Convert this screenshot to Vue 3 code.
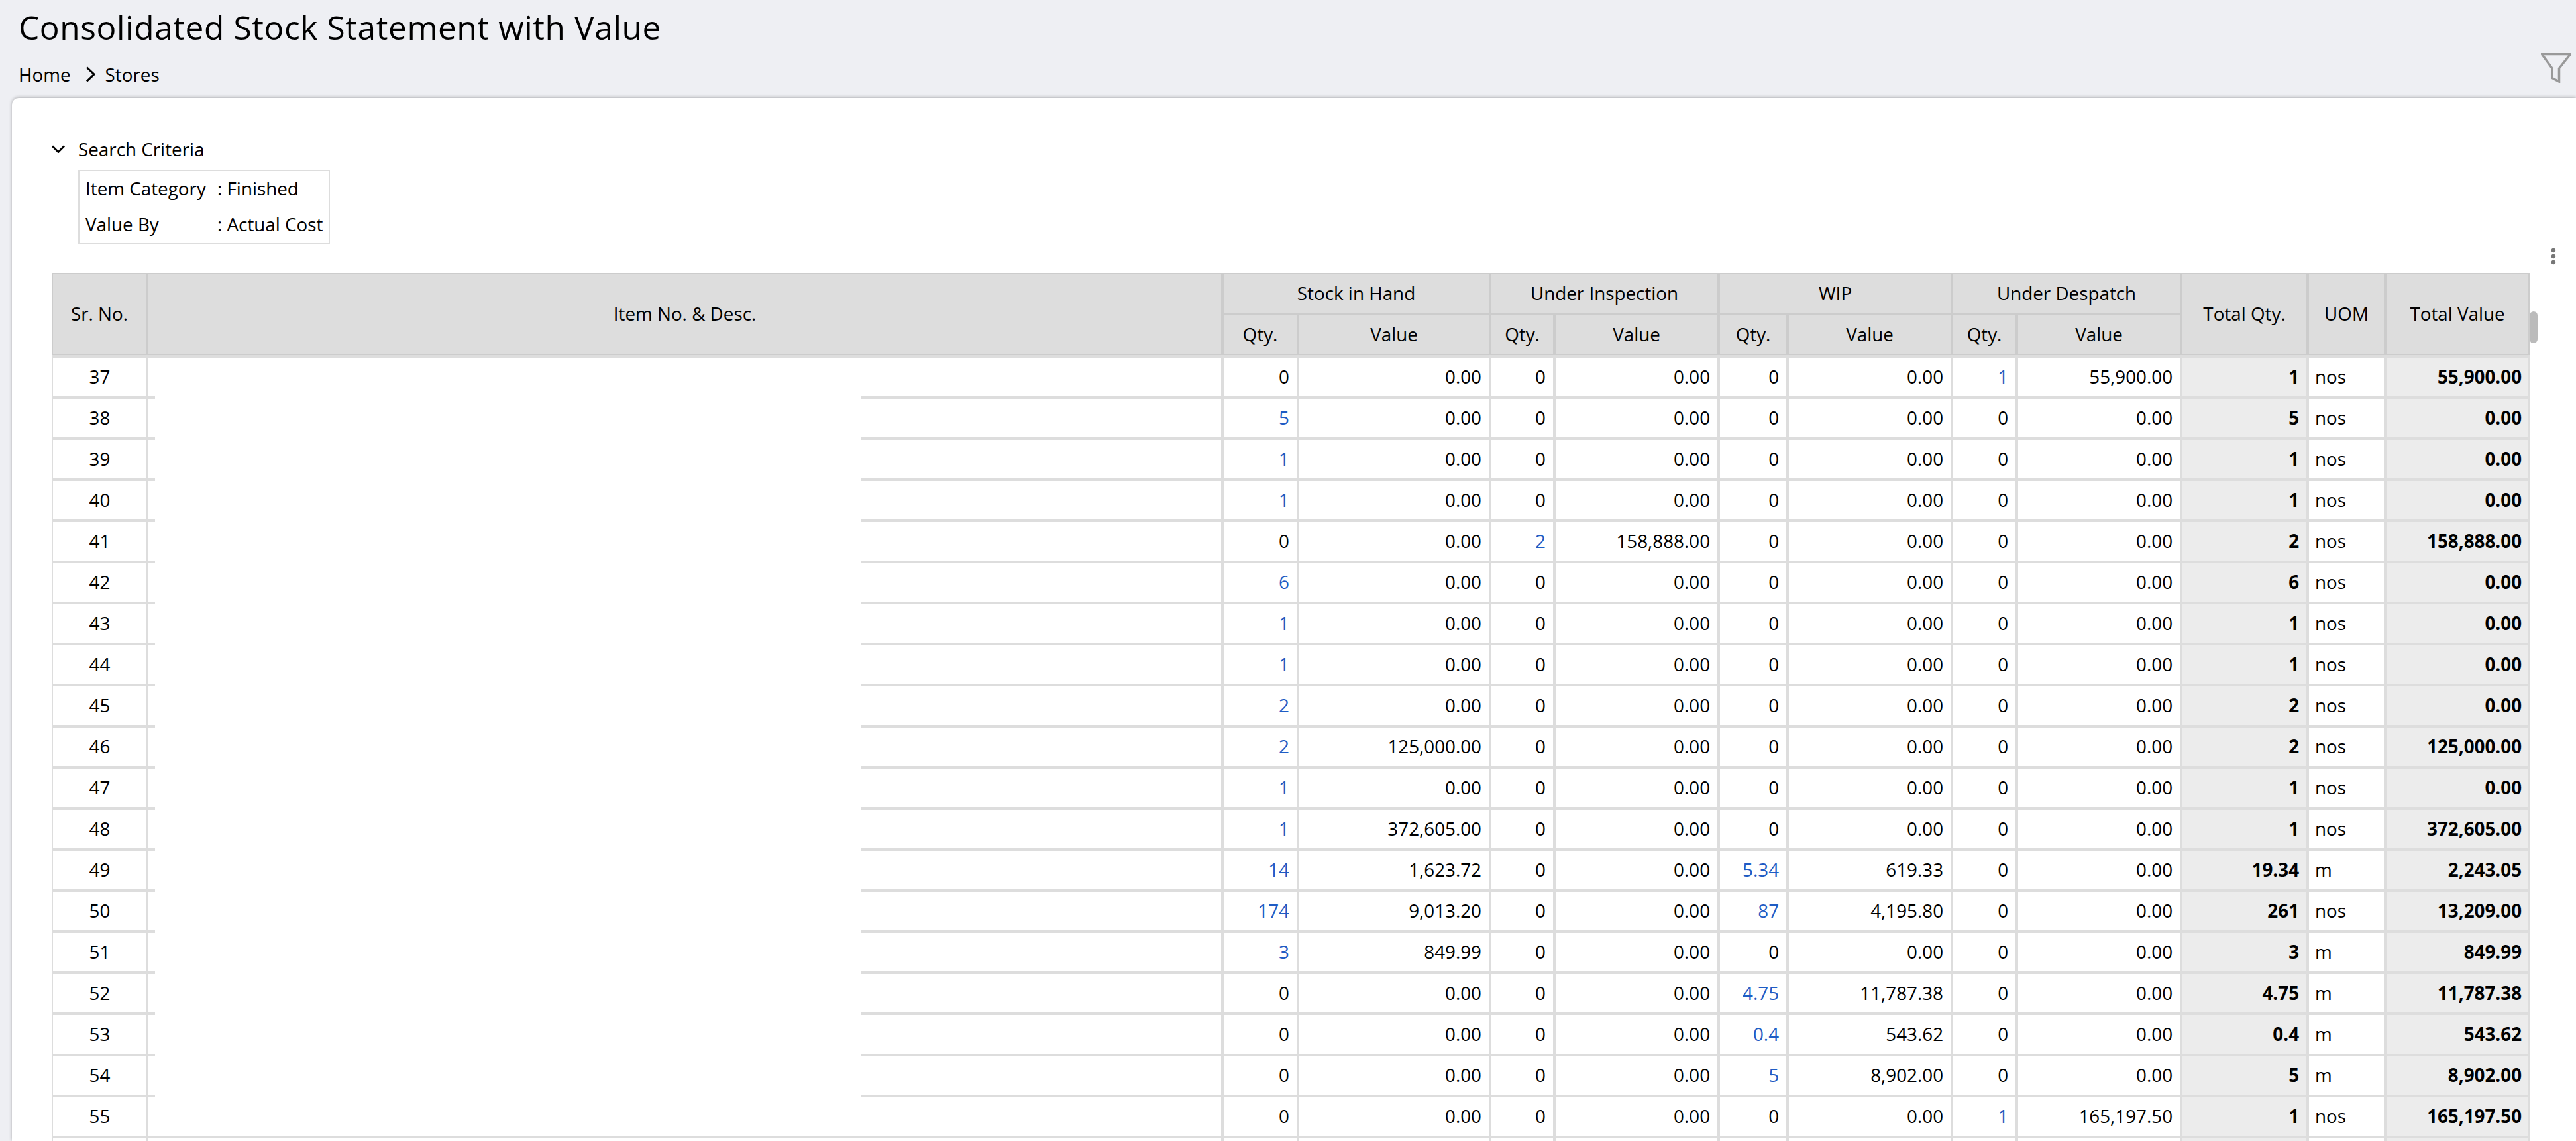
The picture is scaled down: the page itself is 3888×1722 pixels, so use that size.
<script setup>
const base = { s: ['0', '0.00'], i: ['0', '0.00'], w: ['0', '0.00'], d: ['0', '0.00'] }
const mk = (no, over, tq, uom, tv) => ({ no, ...base, ...over, tq, uom, tv })
const rows = [
  mk(37, { d: ['1', '55,900.00'] }, '1', 'nos', '55,900.00'),
  mk(38, { s: ['5', '0.00'] }, '5', 'nos', '0.00'),
  mk(39, { s: ['1', '0.00'] }, '1', 'nos', '0.00'),
  mk(40, { s: ['1', '0.00'] }, '1', 'nos', '0.00'),
  mk(41, { i: ['2', '158,888.00'] }, '2', 'nos', '158,888.00'),
  mk(42, { s: ['6', '0.00'] }, '6', 'nos', '0.00'),
  mk(43, { s: ['1', '0.00'] }, '1', 'nos', '0.00'),
  mk(44, { s: ['1', '0.00'] }, '1', 'nos', '0.00'),
  mk(45, { s: ['2', '0.00'] }, '2', 'nos', '0.00'),
  mk(46, { s: ['2', '125,000.00'] }, '2', 'nos', '125,000.00'),
  mk(47, { s: ['1', '0.00'] }, '1', 'nos', '0.00'),
  mk(48, { s: ['1', '372,605.00'] }, '1', 'nos', '372,605.00'),
  mk(49, { s: ['14', '1,623.72'], w: ['5.34', '619.33'] }, '19.34', 'm', '2,243.05'),
  mk(50, { s: ['174', '9,013.20'], w: ['87', '4,195.80'] }, '261', 'nos', '13,209.00'),
  mk(51, { s: ['3', '849.99'] }, '3', 'm', '849.99'),
  mk(52, { w: ['4.75', '11,787.38'] }, '4.75', 'm', '11,787.38'),
  mk(53, { w: ['0.4', '543.62'] }, '0.4', 'm', '543.62'),
  mk(54, { w: ['5', '8,902.00'] }, '5', 'm', '8,902.00'),
  mk(55, { d: ['1', '165,197.50'] }, '1', 'nos', '165,197.50'),
]
const groups = ['Stock in Hand', 'Under Inspection', 'WIP', 'Under Despatch']
const widths = [146, 1623, 114, 290, 97, 248, 104, 248, 98, 248, 191, 117, 216]
const keys = ['s', 'i', 'w', 'd']
</script>

<template>
  <div class="page">
    <header class="head">
      <h1 class="title">Consolidated Stock Statement with Value</h1>
      <div class="crumbs">
        <span>Home</span>
        <svg class="crumb-sep" viewBox="0 0 15 24" fill="none" stroke="#000" stroke-width="3"><path d="M2 1.5 13 12 2 22.5" /></svg>
        <span>Stores</span>
      </div>
      <svg class="filter" viewBox="0 0 46 46" fill="none" stroke="#999" stroke-width="3.5"><path d="M1.5 1.5H44.5L27.5 23V43L17 37.5V23Z" /></svg>
    </header>
    <main class="card">
      <div class="criteria">
        <div class="crit-title">
          <svg class="crit-chev" viewBox="0 0 20 12" fill="none" stroke="#000" stroke-width="3"><path d="M1 1.5 10 10.5 19 1.5" /></svg>
          <span>Search Criteria</span>
        </div>
        <div class="crit-box">
          <div class="crit-row"><span class="crit-key">Item Category</span><span>: Finished</span></div>
          <div class="crit-row"><span class="crit-key">Value By</span><span>: Actual Cost</span></div>
        </div>
      </div>
      <div class="tools">
        <svg class="dots" viewBox="0 0 8 26" fill="#777"><circle cx="4" cy="4" r="3.2" /><circle cx="4" cy="13" r="3.2" /><circle cx="4" cy="22" r="3.2" /></svg>
      </div>
      <div class="table-wrap">
        <table class="grid">
          <colgroup><col v-for="(w, i) in widths" :key="i" :style="{ width: w + 'px' }"></colgroup>
          <thead>
            <tr class="r1">
              <th rowspan="2" class="first">Sr. No.</th>
              <th rowspan="2">Item No. &amp; Desc.</th>
              <th v-for="g in groups" :key="g" colspan="2" class="grp">{{ g }}</th>
              <th rowspan="2">Total Qty.</th>
              <th rowspan="2">UOM</th>
              <th rowspan="2" class="last">Total Value</th>
            </tr>
            <tr class="r2">
              <template v-for="g in groups" :key="g">
                <th>Qty.</th>
                <th>Value</th>
              </template>
            </tr>
          </thead>
          <tbody>
            <tr v-for="r in rows" :key="r.no">
              <td class="first center">{{ r.no }}</td>
              <td></td>
              <template v-for="k in keys" :key="k">
                <td class="num" :class="{ link: r[k][0] !== '0' }">{{ r[k][0] }}</td>
                <td class="num">{{ r[k][1] }}</td>
              </template>
              <td class="num total">{{ r.tq }}</td>
              <td class="uom">{{ r.uom }}</td>
              <td class="num total last">{{ r.tv }}</td>
            </tr>
            <tr class="more">
              <td class="first"></td>
              <td v-for="n in 12" :key="n" :class="{ total: n === 10 || n === 12, last: n === 12 }"></td>
            </tr>
          </tbody>
        </table>
        <div class="mask"></div>
        <div class="scroll-thumb"></div>
      </div>
    </main>
  </div>
</template>

<style>
html, body { margin: 0; padding: 0; }
</style>

<style scoped>
.page {
  width: 3888px;
  height: 1722px;
  overflow: hidden;
  background: #eeeff3;
  color: #000;
  font-family: "Open Sans", "Noto Sans", sans-serif;
  font-size: 27.8px;
}
.head {
  position: relative;
  height: 148px;
  padding: 0 0 0 28px;
  box-sizing: border-box;
}
.title {
  margin: 0;
  padding-top: 7px;
  font-size: 49.6px;
  line-height: 68px;
  font-weight: 400;
  letter-spacing: 0.6px;
}
.crumbs {
  display: flex;
  align-items: center;
  margin-top: 19px;
  height: 36px;
}
.crumb-sep {
  width: 15px;
  height: 24px;
  margin: 0 15px 0 22px;
}
.filter {
  position: absolute;
  left: 3835px;
  top: 80px;
  width: 46px;
  height: 46px;
}
.card {
  background: #fff;
  margin-left: 18px;
  height: 1574px;
  border-top-left-radius: 10px;
  box-shadow: 0 -1px 5px rgba(0, 0, 0, 0.28);
}
.criteria {
  padding: 54px 0 0 60px;
}
.crit-title {
  display: flex;
  align-items: center;
  height: 46px;
  margin-bottom: 8px;
}
.crit-chev {
  width: 20px;
  height: 12px;
  margin-right: 20px;
}
.crit-box {
  width: 380px;
  height: 112px;
  box-sizing: border-box;
  margin-left: 40px;
  border: 2px solid #ddd;
  padding: 0 0 0 9px;
}
.crit-row {
  display: flex;
  height: 54px;
  line-height: 52px;
}
.crit-key {
  width: 199px;
}
.tools {
  display: flex;
  justify-content: flex-end;
  height: 44px;
  padding: 6px 30px 0 0;
  box-sizing: border-box;
}
.dots {
  width: 8px;
  height: 26px;
}
.table-wrap {
  position: relative;
  margin-left: 60px;
  width: 3740px;
}
.grid {
  table-layout: fixed;
  width: 3740px;
  border-collapse: separate;
  border-spacing: 0;
}
th {
  box-sizing: border-box;
  background: #ddd;
  font-weight: 400;
  text-align: center;
  padding: 0 0 2px;
  border-right: 4px solid #ccc;
  border-bottom: 2px solid #ccc;
}
.r1 th {
  border-top: 2px solid #ccc;
  height: 64px;
}
.r1 th.grp {
  border-bottom-width: 4px;
}
.r2 th {
  height: 60px;
}
td {
  box-sizing: border-box;
  height: 62px;
  padding: 0 11px 3px 12px;
  background: #fff;
  border-right: 4px solid #ddd;
  border-bottom: 4px solid #ddd;
  white-space: nowrap;
}
tbody tr:first-child td {
  height: 66px;
  border-top: 4px solid #ddd;
}
th.first, td.first {
  border-left: 2px solid #ccc;
}
td.first {
  border-left-color: #ddd;
}
th.last, td.last {
  border-right-width: 2px;
}
td.last {
  padding-right: 10px;
}
.center {
  text-align: center;
}
.num {
  text-align: right;
}
td.uom {
  padding-left: 9px;
}
.link {
  color: #1f5cc4;
}
.total {
  background: #ececec;
  font-weight: 700;
}
.mask {
  position: absolute;
  left: 156px;
  top: 128px;
  width: 1066px;
  height: 1174px;
  background: #fff;
}
.scroll-thumb {
  position: absolute;
  left: 3740px;
  top: 58px;
  width: 12px;
  height: 48px;
  border-radius: 6px;
  background: #bbb;
}
</style>
